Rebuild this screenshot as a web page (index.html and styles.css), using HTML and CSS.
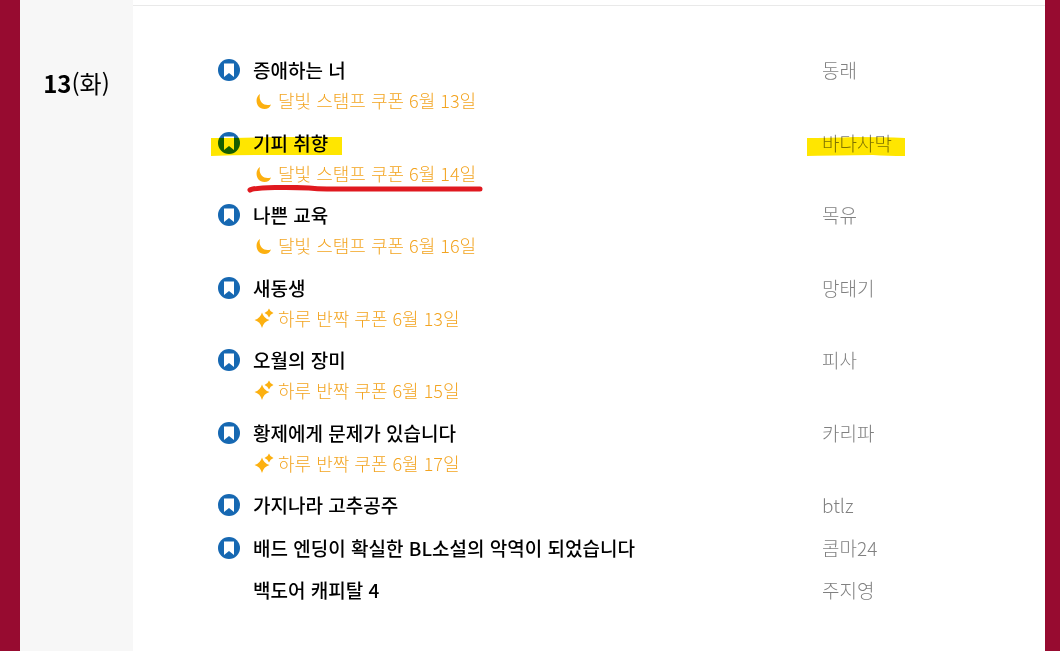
FILE: index.html
```html
<!DOCTYPE html>
<html lang="ko">
<head>
<meta charset="utf-8">
<title>13(화)</title>
<link rel="stylesheet" href="styles.css">
</head>
<body>
<svg class="sprite" aria-hidden="true">
  <symbol id="bookmark" viewBox="0 0 22 22">
    <circle cx="11" cy="11" r="11" fill="#1668b2"/>
    <path d="M6 4.500h10v13.500l-5-4-5 4z" fill="#fff"/>
  </symbol>
  <symbol id="moon" viewBox="0 0 18 18">
    <path d="M5 3C-1 7 1 18 9.500 18c3 0 5.500-1.500 6.500-4.500C9 16 3 10.500 5 3z" fill="#fcb010"/>
  </symbol>
  <symbol id="sparkle" viewBox="0 0 18 18">
    <path d="M7 3.500q1.700 5.800 7.500 7.500q-5.800 1.700-7.500 8q-1.700-6.300-7.500-8q5.800-1.700 7.500-7.500zM14-.5q1.100 3.400 4.500 4.500q-3.400 1.100-4.500 4.500q-1.100-3.400-4.500-4.500q3.400-1.100 4.500-4.500z" fill="#fcb010"/>
  </symbol>
</svg>
<main class="schedule">
  <div class="day"><h2 class="date"><b>13</b>(화)</h2></div>
  <section class="content">
    <ul class="list">
      <li class="row"><svg class="mark"><use href="#bookmark"/></svg><a class="title" href="#">증애하는 너</a><span class="author">동래</span><p class="coupon"><svg class="icon"><use href="#moon"/></svg>달빛 스탬프 쿠폰 6월 13일</p></li>
      <li class="row">
        <svg class="mark"><use href="#bookmark"/></svg><a class="title" href="#">기피 취향</a><span class="author">바다사막<svg class="marker marker-author" viewBox="0 0 98 19"><path d="M0 1Q20 1 48 0Q76 0 98 1V19Q80 19 66 18Q45 18 0 19z" fill="#ffe600"/></svg></span><p class="coupon"><svg class="icon"><use href="#moon"/></svg>달빛 스탬프 쿠폰 6월 14일</p>
        <svg class="marker marker-title" viewBox="0 0 131 19"><path d="M0 1Q30 1 65 0T131 0V18Q100 18 65 18T0 19z" fill="#ffe600"/></svg>
        <svg class="pen" viewBox="0 0 236 8"><path d="M3 5C8 2 45 2 62 3Q70 4 80 4H233" fill="none" stroke="#e0191f" stroke-width="5" stroke-linecap="round"/></svg>
      </li>
      <li class="row"><svg class="mark"><use href="#bookmark"/></svg><a class="title" href="#">나쁜 교육</a><span class="author">목유</span><p class="coupon"><svg class="icon"><use href="#moon"/></svg>달빛 스탬프 쿠폰 6월 16일</p></li>
      <li class="row"><svg class="mark"><use href="#bookmark"/></svg><a class="title" href="#">새동생</a><span class="author">망태기</span><p class="coupon"><svg class="icon"><use href="#sparkle"/></svg>하루 반짝 쿠폰 6월 13일</p></li>
      <li class="row"><svg class="mark"><use href="#bookmark"/></svg><a class="title" href="#">오월의 장미</a><span class="author">피사</span><p class="coupon"><svg class="icon"><use href="#sparkle"/></svg>하루 반짝 쿠폰 6월 15일</p></li>
      <li class="row"><svg class="mark"><use href="#bookmark"/></svg><a class="title" href="#">황제에게 문제가 있습니다</a><span class="author">카리파</span><p class="coupon"><svg class="icon"><use href="#sparkle"/></svg>하루 반짝 쿠폰 6월 17일</p></li>
      <li class="row"><svg class="mark"><use href="#bookmark"/></svg><a class="title" href="#">가지나라 고추공주</a><span class="author">btlz</span></li>
      <li class="row"><svg class="mark"><use href="#bookmark"/></svg><a class="title" href="#">배드 엔딩이 확실한 BL소설의 악역이 되었습니다</a><span class="author">콤마24</span></li>
      <li class="row"><a class="title" href="#">백도어 캐피탈 4</a><span class="author">주지영</span></li>
    </ul>
  </section>
</main>
</body>
</html>
```
FILE: styles.css
```css
* { box-sizing: border-box; }
body {
  margin: 0;
  background: #970b30;
  color: #000;
  font-family: "Noto Sans CJK KR", sans-serif;
}
.sprite { position: absolute; width: 0; height: 0; }
.schedule {
  display: grid;
  grid-template-columns: 113px 1fr;
  min-height: 100vh;
  margin: 0 15px 0 20px;
  background: #fff;
}
.day { padding-top: 65px; background: #f7f7f7; text-align: center; }
.date { margin: 0; font-size: 24px; line-height: 36px; font-weight: 400; }
.content { padding-top: 5px; }
.list {
  margin: 0;
  padding: 48px 0 32px 85px;
  border-top: 1px solid #e9e9e9;
  list-style: none;
}
.row {
  position: relative;
  display: grid;
  grid-template-columns: 35px 1fr 223px;
  align-items: center;
  padding-bottom: 11px;
  line-height: 32px;
}
.row:nth-child(even) { padding-bottom: 10px; }
.mark { width: 22px; height: 22px; }
.title {
  grid-column: 2;
  color: #000;
  font-size: 19px;
  font-weight: 500;
  text-decoration: none;
}
.author {
  position: relative;
  grid-column: 3;
  color: #808080;
  font-size: 19px;
  font-weight: 300;
}
.coupon {
  grid-column: 2 / 4;
  display: flex;
  align-items: center;
  gap: 5px;
  margin: 0;
  padding: 0 0 2px 2px;
  color: #f3a420;
  font-size: 18px;
  font-weight: 300;
  line-height: 28px;
}
.icon, #sparkle { overflow: visible; }
.icon { width: 18px; height: 18px; }
.marker { position: absolute; mix-blend-mode: multiply; }
.marker-title { left: -7px; top: 10px; width: 131px; height: 19px; }
.marker-author { left: -15px; top: 10px; width: 98px; height: 19px; }
.pen { position: absolute; left: 29px; top: 58px; width: 236px; height: 8px; }
```
